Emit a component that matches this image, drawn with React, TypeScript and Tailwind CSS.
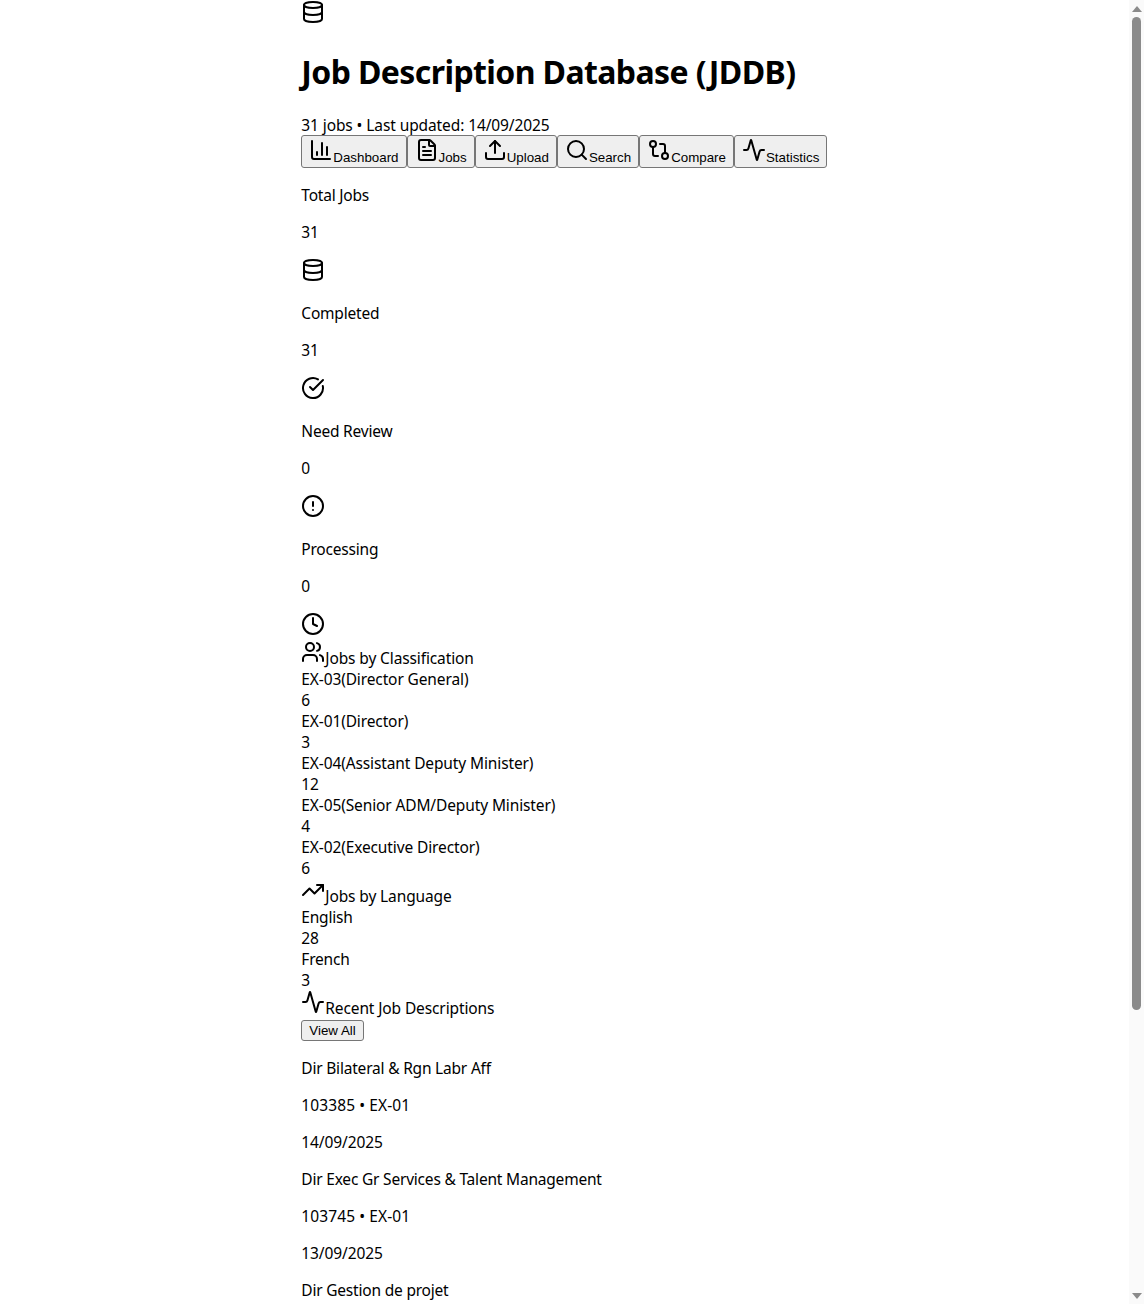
import { Activity, ChartColumn, CircleAlert, CircleCheckBig, Clock, Database, FileText, GitCompare, Search, TrendingUp, Upload, Users } from "lucide-react";
import type { ComponentType } from "react";

type IconType = ComponentType<{ className?: string }>;

const tabs: [IconType, string][] = [
  [ChartColumn, "Dashboard"],
  [FileText, "Jobs"],
  [Upload, "Upload"],
  [Search, "Search"],
  [GitCompare, "Compare"],
  [Activity, "Statistics"],
];

const stats: [string, string, IconType][] = [
  ["Total Jobs", "31", Database],
  ["Completed", "31", CircleCheckBig],
  ["Need Review", "0", CircleAlert],
  ["Processing", "0", Clock],
];

const classes = [
  ["EX-03", "Director General", "6"],
  ["EX-01", "Director", "3"],
  ["EX-04", "Assistant Deputy Minister", "12"],
  ["EX-05", "Senior ADM/Deputy Minister", "4"],
  ["EX-02", "Executive Director", "6"],
];

const recent = [
  ["Dir Bilateral & Rgn Labr Aff", "103385 • EX-01", "14/09/2025"],
  ["Dir Exec Gr Services & Talent Management", "103745 • EX-01", "13/09/2025"],
];

function SectionTitle({ icon: Icon, title }: { icon: IconType; title: string }) {
  return (
    <h3 className="h-7 whitespace-nowrap tracking-[-0.12px]">
      <Icon className="inline size-6 align-baseline" />
      {title}
    </h3>
  );
}

export default function App() {
  return (
    <div className="flex h-[1304px] overflow-hidden bg-white text-[15.5px] leading-[23px] tracking-[-0.2px] text-black [font-family:'Noto_Sans',sans-serif]">
      <main className="flex min-w-0 flex-1 justify-center">
        <div className="w-[526.4px]">
          <header>
            <div className="h-7">
              <Database className="size-6" />
            </div>
            <h1 className="mt-[22px] mb-[21px] text-[32px] leading-[43px] font-bold tracking-[-0.6px] whitespace-nowrap">Job Description Database (JDDB)</h1>
            <p className="h-[21px] tracking-[-0.1px]">31 jobs • Last updated: 14/09/2025</p>
          </header>

          <nav className="flex">
            {tabs.map(([Icon, label]) => (
              <button
                key={label}
                className="h-[33px] rounded-[3px] border border-[#767676] bg-[#efefef] px-[7px] text-[13.33px] leading-[15px] tracking-normal whitespace-nowrap [font-family:'Liberation_Sans',sans-serif]"
              >
                <Icon className="inline size-6 align-baseline" />
                {label}
              </button>
            ))}
          </nav>

          <section className="mt-4">
            {stats.map(([label, value, Icon]) => (
              <div key={label}>
                <p className="mb-4 h-[21px]">{label}</p>
                <p className="mb-4 h-[21px]">{value}</p>
                <div className="mb-4 h-7">
                  <Icon className="size-6" />
                </div>
              </div>
            ))}
          </section>

          <section className="-mt-4">
            <SectionTitle icon={Users} title="Jobs by Classification" />
            {classes.map(([code, name, count]) => (
              <div key={code}>
                <div className="h-[21px] tracking-[-0.12px]">
                  <span>{code}</span>
                  <span>({name})</span>
                </div>
                <div className="h-[21px]">{count}</div>
              </div>
            ))}
          </section>

          <section>
            <SectionTitle icon={TrendingUp} title="Jobs by Language" />
            <div className="h-[21px]">English</div>
            <div className="h-[21px]">28</div>
            <div className="h-[21px]">French</div>
            <div className="h-[21px]">3</div>
          </section>

          <section>
            <SectionTitle icon={Activity} title="Recent Job Descriptions" />
            <div className="h-[23px]">
              <button className="h-[21px] rounded-[3px] border border-[#767676] bg-[#efefef] px-[7px] text-[13.33px] leading-[15px] tracking-normal [font-family:'Liberation_Sans',sans-serif]">
                View All
              </button>
            </div>
            {recent.map(([title, meta, date]) => (
              <div key={meta} className="mt-4">
                <p className="mb-4 h-[21px]">{title}</p>
                <p className="mb-4 h-[21px] tracking-[0.1px]">{meta}</p>
                <p className="h-[21px] tracking-[-0.1px]">{date}</p>
              </div>
            ))}
            <p className="mt-4 h-[21px]">Dir Gestion de projet</p>
          </section>
        </div>
      </main>

      <aside className="flex h-full w-[15px] shrink-0 flex-col items-center bg-[#fafafa]">
        <div className="mt-[6px] h-0 w-0 border-x-[5px] border-b-[6px] border-x-transparent border-b-[#8b8b8b]" />
        <div className="mt-[5px] h-[993px] w-[9px] rounded-[5px] bg-[#8b8b8b]" />
        <div className="mt-auto mb-[5px] h-0 w-0 border-x-[5px] border-t-[6px] border-x-transparent border-t-[#8b8b8b]" />
      </aside>
    </div>
  );
}
